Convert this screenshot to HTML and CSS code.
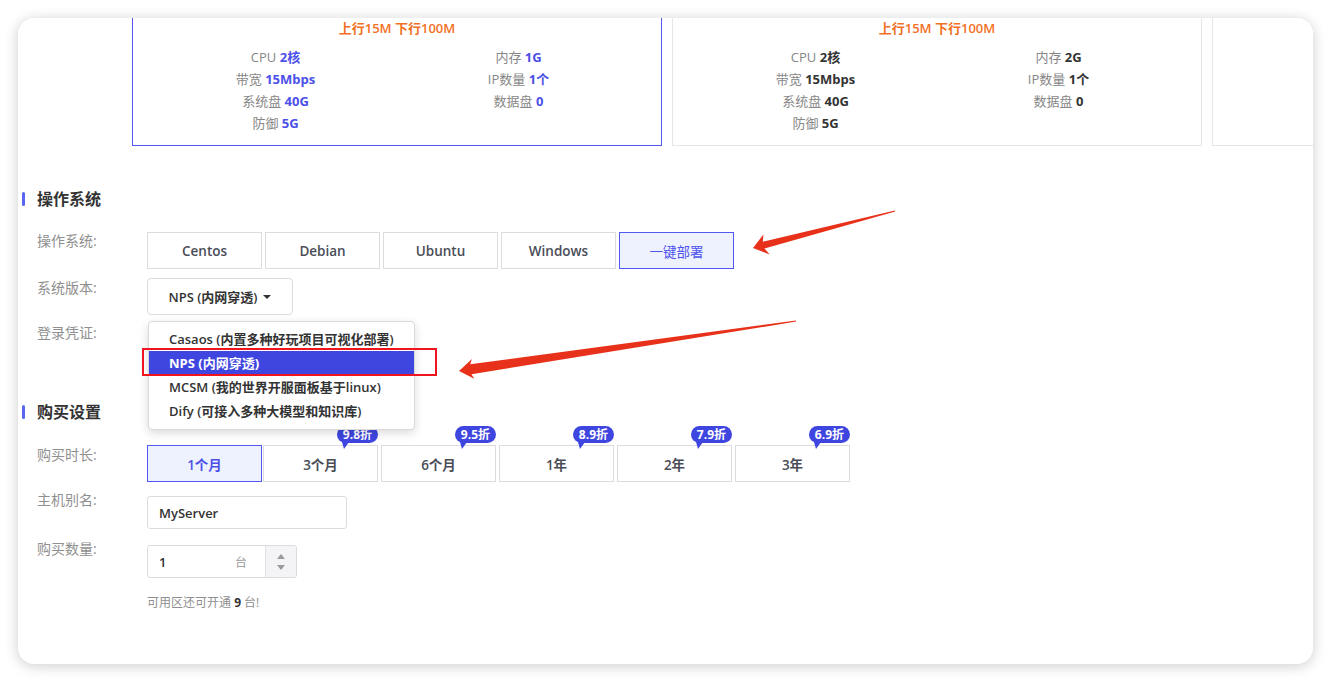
FILE: index.html
```html
<!DOCTYPE html>
<html lang="zh-CN">
<head>
<meta charset="utf-8">
<title>购买</title>
<link rel="stylesheet" href="styles.css">
</head>
<body>
<div class="window">
  <div class="plans">
    <div class="plan active">
      <div class="plan-title">上行15M 下行100M</div>
      <div class="specs">
        <div>CPU <b>2核</b></div><div>内存 <b>1G</b></div>
        <div>带宽 <b>15Mbps</b></div><div>IP数量 <b>1个</b></div>
        <div>系统盘 <b>40G</b></div><div>数据盘 <b>0</b></div>
        <div>防御 <b>5G</b></div><div></div>
      </div>
    </div>
    <div class="plan">
      <div class="plan-title">上行15M 下行100M</div>
      <div class="specs">
        <div>CPU <b>2核</b></div><div>内存 <b>2G</b></div>
        <div>带宽 <b>15Mbps</b></div><div>IP数量 <b>1个</b></div>
        <div>系统盘 <b>40G</b></div><div>数据盘 <b>0</b></div>
        <div>防御 <b>5G</b></div><div></div>
      </div>
    </div>
    <div class="plan empty"></div>
  </div>

  <h2 class="section-title first">操作系统</h2>

  <div class="form-row os-row">
    <div class="label">操作系统:</div>
    <div class="options">
      <div class="opt">Centos</div>
      <div class="opt">Debian</div>
      <div class="opt">Ubuntu</div>
      <div class="opt">Windows</div>
      <div class="opt selected light">一键部署</div>
    </div>
  </div>

  <div class="form-row version-row">
    <div class="label">系统版本:</div>
    <div class="select-wrap">
      <div class="select">NPS (内网穿透)<span class="caret"></span></div>
      <div class="menu">
        <div class="menu-item">Casaos (内置多种好玩项目可视化部署)</div>
        <div class="menu-item active">NPS (内网穿透)</div>
        <div class="menu-item">MCSM (我的世界开服面板基于linux)</div>
        <div class="menu-item">Dify (可接入多种大模型和知识库)</div>
      </div>
    </div>
  </div>

  <div class="form-row cred-row">
    <div class="label">登录凭证:</div>
    <div class="cred-space"></div>
  </div>

  <h2 class="section-title second">购买设置</h2>

  <div class="form-row duration-row">
    <div class="label">购买时长:</div>
    <div class="options duration">
      <div class="opt selected">1个月</div>
      <div class="opt">3个月<span class="badge">9.8折</span></div>
      <div class="opt">6个月<span class="badge">9.5折</span></div>
      <div class="opt">1年<span class="badge">8.9折</span></div>
      <div class="opt">2年<span class="badge">7.9折</span></div>
      <div class="opt">3年<span class="badge">6.9折</span></div>
    </div>
  </div>

  <div class="form-row host-row">
    <div class="label">主机别名:</div>
    <div class="text-input">MyServer</div>
  </div>

  <div class="form-row qty-row">
    <div class="label">购买数量:</div>
    <div class="number-input">
      <div class="num-value">1</div>
      <div class="num-unit">台</div>
      <div class="spinner">
        <span class="up"></span>
        <span class="down"></span>
      </div>
    </div>
  </div>

  <div class="note">可用区还可开通 <b>9</b> 台!</div>
</div>

<svg class="annotations" width="1331" height="683" viewBox="0 0 1331 683">
  <polygon fill="#e8311a" points="753,248 763.4,234.4 762.8,241.8 894.8,210.4 895.2,211.6 764.5,248.6 769.7,254.5"/>
  <polygon fill="#e8311a" points="459,371 471.9,359 470.2,364.3 795.9,320.4 796.1,321.6 471.5,374.2 474.3,378.8"/>
  <rect x="143" y="349" width="293" height="26" fill="none" stroke="#f0141e" stroke-width="2"/>
</svg>
</body>
</html>
```

FILE: styles.css
```css
* { box-sizing: border-box; }

html, body {
  margin: 0;
  padding: 0;
  background: #ffffff;
}

body {
  font-family: "Open Sans", "Noto Sans CJK SC", sans-serif;
  color: #333;
  position: relative;
  width: 1331px;
  height: 683px;
  overflow: hidden;
}

.window {
  margin: 18px;
  width: 1295px;
  height: 646px;
  background: #fff;
  border-radius: 16px;
  box-shadow: 0 2px 14px rgba(0, 0, 0, 0.2);
  overflow: hidden;
  position: relative;
  z-index: 1;
}

/* plan cards */
.plans {
  display: flex;
  gap: 10px;
  margin-top: -13px;
  margin-left: 114px;
}

.plan {
  flex: 0 0 530px;
  border: 1px solid #e6e6e6;
  padding: 12px 21px 11px;
  background: #fff;
}

.plan.empty {
  height: 141px;
}

.plan.active {
  border-color: #5256f2;
}

.plan-title {
  text-align: center;
  line-height: 20px;
  font-size: 13px;
  font-weight: 600;
  color: #f2701f;
}

.specs {
  margin-top: 8px;
  display: grid;
  grid-template-columns: 1fr 1fr;
  text-align: center;
  font-size: 13px;
  line-height: 22px;
  color: #878787;
}

.specs b {
  font-weight: 700;
  color: #333;
}

.plan.active .specs b {
  color: #4c50e8;
}

/* section titles */
.section-title {
  margin: 0;
  height: 20px;
  line-height: 20px;
  display: flex;
  align-items: center;
  gap: 12px;
  padding-left: 4px;
  font-size: 16px;
  font-weight: 700;
  color: #333;
}

.section-title::before {
  content: "";
  width: 3px;
  height: 14px;
  border-radius: 2px;
  background: #5a66f0;
}

.section-title.first { margin-top: 43px; }
.section-title.second { margin-top: 42px; }

/* form rows */
.form-row {
  display: flex;
  align-items: flex-start;
  padding-left: 19px;
}

.label {
  width: 110px;
  flex: 0 0 110px;
  font-size: 14px;
  line-height: 20px;
  color: #8f8f8f;
}

.os-row { margin-top: 23px; }
.version-row { margin-top: 9px; }
.cred-row { margin-top: 8px; }
.duration-row { margin-top: 23px; }
.host-row { margin-top: 8px; }
.qty-row { margin-top: 10px; }

.os-row .label { margin-top: -1px; }

.options {
  display: flex;
  gap: 3px;
}

.opt {
  position: relative;
  width: 115px;
  height: 37px;
  border: 1px solid #dcdcdc;
  background: #fff;
  display: flex;
  align-items: center;
  justify-content: center;
  font-size: 13.5px;
  font-weight: 600;
  color: #4a4d57;
}

.opt.selected {
  background: #eef2fe;
  border-color: #5256f2;
  color: #4c50e8;
}

.opt.selected.light {
  font-weight: 400;
  color: #4f53ee;
}

.duration .opt:first-child { margin-right: -2px; }

.badge {
  position: absolute;
  top: -20px;
  right: -1px;
  height: 17px;
  line-height: 17px;
  padding: 0 6px;
  border-radius: 9px;
  background: #3f46e0;
  color: #fff;
  font-size: 12px;
  font-weight: 700;
}

.badge::after {
  content: "";
  position: absolute;
  left: 5px;
  bottom: -6px;
  border-left: 2px solid transparent;
  border-right: 5px solid transparent;
  border-top: 7px solid #3f46e0;
}

/* select */
.select-wrap {
  position: relative;
}

.select {
  width: 146px;
  height: 37px;
  border: 1px solid #dcdcdc;
  border-radius: 4px;
  display: flex;
  align-items: center;
  justify-content: center;
  gap: 4px;
  font-size: 13px;
  font-weight: 600;
  color: #333;
}

.caret {
  width: 0;
  height: 0;
  border-left: 4px solid transparent;
  border-right: 4px solid transparent;
  border-top: 4px solid #333;
  margin-left: 2px;
}

.menu {
  position: absolute;
  top: 43px;
  left: 1px;
  width: 267px;
  background: #fff;
  border: 1px solid #dadada;
  border-radius: 4px;
  box-shadow: 0 3px 10px rgba(0, 0, 0, 0.15);
  padding: 5px 0 6px;
  z-index: 5;
}

.menu-item {
  height: 24px;
  line-height: 24px;
  padding-left: 20px;
  font-size: 13px;
  font-weight: 600;
  color: #333;
  white-space: nowrap;
}

.menu-item.active {
  background: #3f46e0;
  color: #fff;
  font-weight: 700;
}

.cred-space {
  height: 37px;
}

/* inputs */
.text-input {
  margin-top: 6px;
  width: 200px;
  height: 33px;
  border: 1px solid #dcdcdc;
  border-radius: 3px;
  padding-left: 11px;
  display: flex;
  align-items: center;
  font-size: 13px;
  font-weight: 600;
  color: #333;
}

.number-input {
  margin-top: 6px;
  width: 150px;
  height: 33px;
  border: 1px solid #dcdcdc;
  border-radius: 3px;
  display: flex;
  align-items: stretch;
  overflow: hidden;
}

.num-value {
  flex: 1;
  padding-left: 11px;
  display: flex;
  align-items: center;
  font-size: 13px;
  font-weight: 600;
  color: #333;
}

.num-unit {
  width: 30px;
  display: flex;
  align-items: center;
  font-size: 12px;
  color: #999;
}

.spinner {
  width: 31px;
  border-left: 1px solid #e0e0e0;
  background: #f4f4f6;
  display: flex;
  flex-direction: column;
  align-items: center;
  justify-content: center;
  gap: 6px;
}

.spinner .up {
  width: 0;
  height: 0;
  border-left: 4px solid transparent;
  border-right: 4px solid transparent;
  border-bottom: 5px solid #9a9a9a;
}

.spinner .down {
  width: 0;
  height: 0;
  border-left: 4px solid transparent;
  border-right: 4px solid transparent;
  border-top: 5px solid #9a9a9a;
}

.note {
  margin-top: 16px;
  padding-left: 129px;
  font-size: 12px;
  line-height: 18px;
  color: #8f8f8f;
}

.note b {
  font-weight: 700;
  color: #333;
}

.annotations {
  position: absolute;
  left: 0;
  top: 0;
  z-index: 10;
  pointer-events: none;
}
```
